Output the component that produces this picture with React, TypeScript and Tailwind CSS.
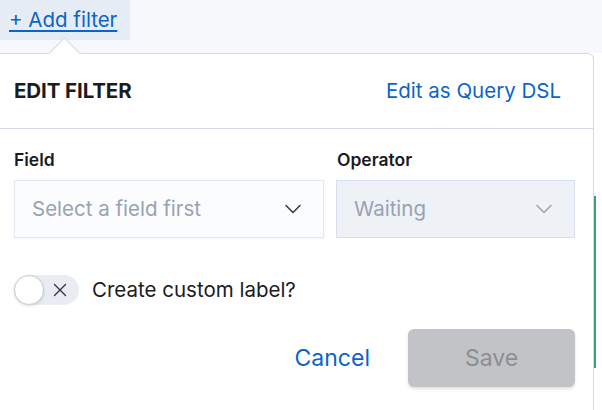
import React from "react";

function Chevron({ color }: { color: string }) {
  return (
    <svg width="20" height="20" viewBox="0 0 20 20" fill="none">
      <path d="M3 6.5 L10 13.5 L17 6.5" stroke={color} strokeWidth="1.5" strokeLinecap="round" strokeLinejoin="round" />
    </svg>
  );
}

export default function App() {
  return (
    <div
      className="relative w-[602px] h-[410px] overflow-hidden bg-white"
      style={{ fontFamily: "Inter, 'Noto Sans', sans-serif" }}
    >
      {/* top strip */}
      <div className="h-[53px] bg-[#f7f8fb]">
        <div className="w-[130px] h-[40px] bg-[#e6ecf5] flex items-center pl-[9px]">
          <span className="text-[20.5px] leading-none text-[#0b64c6] underline underline-offset-[3px] decoration-[1.5px]">
            + Add filter
          </span>
        </div>
      </div>

      {/* panel */}
      <div className="relative w-[594px] h-[370px] bg-white border-t border-r border-[#d3dae6] rounded-tr-[6px]">
        {/* arrow */}
        <div className="absolute left-[53px] top-[-12px] w-[23px] h-[23px] rotate-45 bg-white border-t border-l border-[#d3dae6]"></div>

        {/* header */}
        <div className="relative flex items-center justify-between h-[75px] pl-[14px] pr-[32px] border-b border-[#d3dae6]">
          <span className="text-[20.5px] font-bold text-[#1a1c21] tracking-[-0.1px]">EDIT FILTER</span>
          <span className="text-[20.5px] text-[#0b64c6]">Edit as Query DSL</span>
        </div>

        {/* body */}
        <div className="pl-[14px] pt-[20px]">
          <div className="grid grid-cols-[310px_239px] gap-x-[12px]">
            <div className="flex flex-col">
              <span className="text-[17.5px] font-semibold text-[#1a1c21] leading-[22px] mb-[9px]">Field</span>
              <div className="h-[58px] bg-[#fbfcfd] border border-[#e3e8f1] shadow-[0_1px_2px_rgba(0,0,0,0.06)] flex items-center justify-between pl-[17px] pr-[20px]">
                <span className="text-[20.5px] text-[#98a2b3]">Select a field first</span>
                <Chevron color="#343741" />
              </div>
            </div>
            <div className="flex flex-col">
              <span className="text-[17.5px] font-semibold text-[#1a1c21] leading-[22px] mb-[9px] pl-[1px]">Operator</span>
              <div className="h-[58px] bg-[#eef2f7] border border-[#d6dfed] flex items-center justify-between pl-[17px] pr-[20px]">
                <span className="text-[20.5px] text-[#98a2b3]">Waiting</span>
                <Chevron color="#98a2b3" />
              </div>
            </div>
          </div>

          {/* toggle */}
          <div className="flex items-center mt-[37px] h-[30px]">
            <div className="relative w-[65px] h-[30px] rounded-full bg-[#e9edf3] flex items-center">
              <div className="w-[30px] h-[30px] rounded-full bg-white border border-[#c9ced6] shadow-[0_1px_3px_rgba(0,0,0,0.15)]"></div>
              <svg className="absolute left-[39px] top-[8px]" width="14" height="14" viewBox="0 0 14 14">
                <path d="M1.5 1.5 L12.5 12.5 M12.5 1.5 L1.5 12.5" stroke="#343741" strokeWidth="1.4" strokeLinecap="round" />
              </svg>
            </div>
            <span className="ml-[13px] text-[20.5px] text-[#1a1c21]">Create custom label?</span>
          </div>

          {/* buttons */}
          <div className="flex items-center justify-end mt-[24px] pr-[18px]">
            <span className="text-[23px] text-[#0b64c6] mr-[38px]">Cancel</span>
            <div className="w-[167px] h-[58px] rounded-[6px] bg-[#c2c3c6] shadow-[0_2px_3px_rgba(0,0,0,0.12)] flex items-center justify-center">
              <span className="text-[23px] text-[#8d8e91]">Save</span>
            </div>
          </div>
        </div>
        <div className="absolute right-[-3px] top-[142px] w-[2px] h-[172px] bg-[#3d9e7f]"></div>
      </div>
    </div>
  );
}
